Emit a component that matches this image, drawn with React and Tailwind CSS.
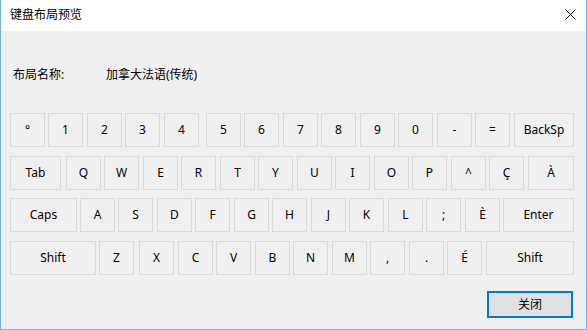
import React from 'react';

const rows = [
  {
    mt: 'mt-[30px]',
    keys: [
      { k: '°', c: 'w-[35px]' },
      { k: '1', c: 'w-[35px] ml-[3px]' },
      { k: '2', c: 'w-[35px] ml-[4px]' },
      { k: '3', c: 'w-[35px] ml-[3px]' },
      { k: '4', c: 'w-[35px] ml-[4px]' },
      { k: '5', c: 'w-[35px] ml-[7px]' },
      { k: '6', c: 'w-[35px] ml-[3px]' },
      { k: '7', c: 'w-[35px] ml-[4px]' },
      { k: '8', c: 'w-[35px] ml-[3px]' },
      { k: '9', c: 'w-[35px] ml-[4px]' },
      { k: '0', c: 'w-[35px] ml-[3px]' },
      { k: '-', c: 'w-[35px] ml-[4px]' },
      { k: '=', c: 'w-[35px] ml-[3px]' },
      { k: 'BackSp', c: 'w-[60px] ml-[4px]' },
    ],
  },
  {
    mt: 'mt-[9px]',
    keys: [
      { k: 'Tab', c: 'w-[51px]' },
      { k: 'Q', c: 'w-[35px] ml-[5px]' },
      { k: 'W', c: 'w-[35px] ml-[3px]' },
      { k: 'E', c: 'w-[35px] ml-[4px]' },
      { k: 'R', c: 'w-[35px] ml-[3px]' },
      { k: 'T', c: 'w-[35px] ml-[4px]' },
      { k: 'Y', c: 'w-[35px] ml-[3px]' },
      { k: 'U', c: 'w-[35px] ml-[4px]' },
      { k: 'I', c: 'w-[35px] ml-[3px]' },
      { k: 'O', c: 'w-[35px] ml-[4px]' },
      { k: 'P', c: 'w-[35px] ml-[3px]' },
      { k: '^', c: 'w-[35px] ml-[4px]' },
      { k: 'Ç', c: 'w-[35px] ml-[3px]' },
      { k: 'À', c: 'w-[46px] ml-[4px]' },
    ],
  },
  {
    mt: 'mt-[8px]',
    keys: [
      { k: 'Caps', c: 'w-[67px]' },
      { k: 'A', c: 'w-[35px] ml-[3px]' },
      { k: 'S', c: 'w-[35px] ml-[3px]' },
      { k: 'D', c: 'w-[35px] ml-[4px]' },
      { k: 'F', c: 'w-[35px] ml-[3px]' },
      { k: 'G', c: 'w-[35px] ml-[4px]' },
      { k: 'H', c: 'w-[35px] ml-[3px]' },
      { k: 'J', c: 'w-[35px] ml-[4px]' },
      { k: 'K', c: 'w-[35px] ml-[3px]' },
      { k: 'L', c: 'w-[35px] ml-[4px]' },
      { k: ';', c: 'w-[35px] ml-[3px]' },
      { k: 'È', c: 'w-[35px] ml-[4px]' },
      { k: 'Enter', c: 'w-[71px] ml-[3px]' },
    ],
  },
  {
    mt: 'mt-[9px]',
    keys: [
      { k: 'Shift', c: 'w-[86px]' },
      { k: 'Z', c: 'w-[35px] ml-[3px]' },
      { k: 'X', c: 'w-[35px] ml-[5px]' },
      { k: 'C', c: 'w-[35px] ml-[4px]' },
      { k: 'V', c: 'w-[35px] ml-[3px]' },
      { k: 'B', c: 'w-[35px] ml-[4px]' },
      { k: 'N', c: 'w-[35px] ml-[3px]' },
      { k: 'M', c: 'w-[35px] ml-[4px]' },
      { k: ',', c: 'w-[35px] ml-[3px]' },
      { k: '.', c: 'w-[35px] ml-[4px]' },
      { k: 'É', c: 'w-[35px] ml-[3px]' },
      { k: 'Shift', c: 'w-[88px] ml-[4px]' },
    ],
  },
];

function Key({ k, c }) {
  return (
    <div className={`${c} h-[34px] shrink-0 flex items-center justify-center border border-[#dadada] text-[12px] text-black`}>
      {k}
    </div>
  );
}

export default function App() {
  return (
    <div
      className="w-[587px] h-[330px] flex flex-col overflow-hidden border border-[#71b1ec] border-t-0 bg-[#f0f0f0] text-black"
      style={{ fontFamily: '"Noto Sans", "Noto Sans CJK SC", sans-serif' }}
    >
      {/* title bar */}
      <div className="h-[31px] shrink-0 bg-white flex items-center justify-between pl-[9px] pr-[10px] text-[12px]">
        <span className="mt-[-2px]">键盘布局预览</span>
        <svg width="11" height="11" viewBox="0 0 11 11" className="mt-[-2px]">
          <path d="M0.5 0.5 L10.5 10.5 M10.5 0.5 L0.5 10.5" stroke="#000" strokeWidth="1" />
        </svg>
      </div>

      {/* body */}
      <div className="flex-1 flex flex-col pl-[9px] pr-[12px]">
        <div className="mt-[36px] h-[16px] flex items-center text-[12px] leading-[16px]">
          <span className="pl-[3px] w-[96px]">布局名称:</span>
          <span>加拿大法语(传统)</span>
        </div>

        {rows.map((row, i) => (
          <div key={i} className={`${row.mt} flex`}>
            {row.keys.map((key, j) => (
              <Key key={j} k={key.k} c={key.c} />
            ))}
          </div>
        ))}

        <div className="mt-[16px] flex justify-end pr-[1px]">
          <button className="w-[86px] h-[27px] border-2 border-[#0078d7] bg-[#e1e1e1] text-[12px] flex items-center justify-center">
            关闭
          </button>
        </div>
      </div>
    </div>
  );
}
